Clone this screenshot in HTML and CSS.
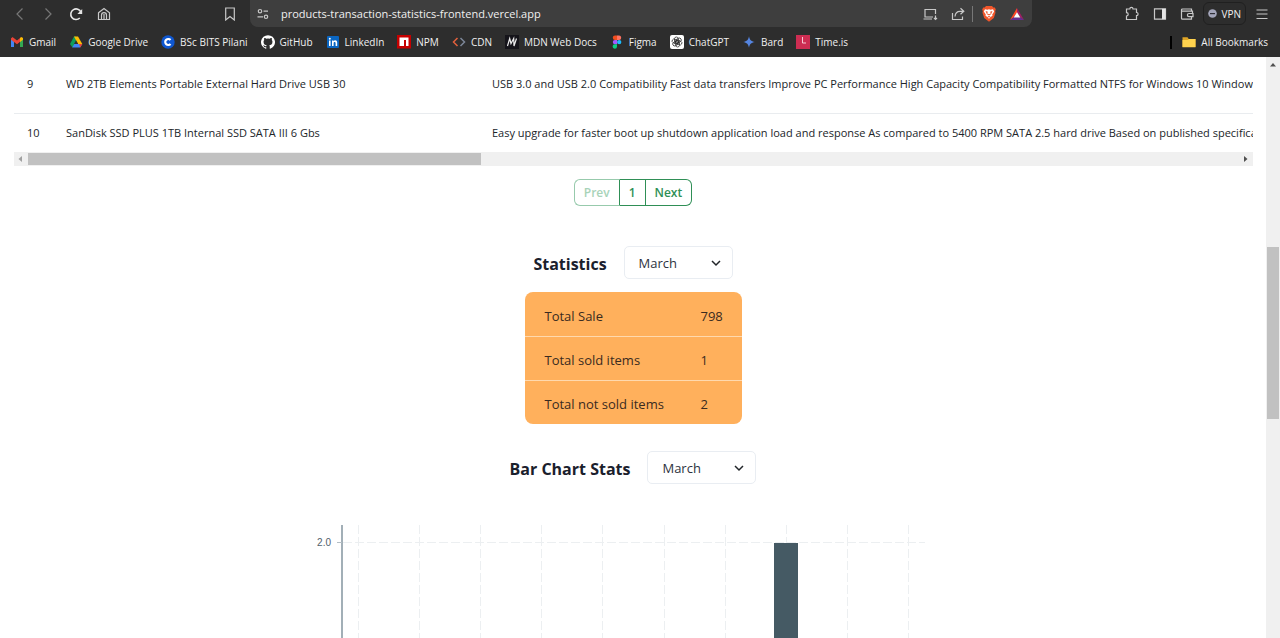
FILE: index.html
```html
<!DOCTYPE html>
<html lang="en">
<head>
<meta charset="utf-8">
<meta name="viewport" content="width=device-width, initial-scale=1">
<title>Products Transaction Statistics</title>
<link rel="stylesheet" href="styles.css">
</head>
<body>
<header class="browser">
  <div class="toolbar">
    <div class="nav">
      <button class="tool dim" aria-label="Back"><svg width="14" height="14" viewBox="0 0 14 14"><path d="M9.5 1.5 4 7l5.500 5.500"/></svg></button>
      <button class="tool dim" aria-label="Forward"><svg width="14" height="14" viewBox="0 0 14 14"><path d="M4.500 1.500 10 7l-5.500 5.500"/></svg></button>
      <button class="tool" aria-label="Reload"><svg width="14" height="14" viewBox="0 0 14 14"><path class="bold" d="M10.800 11A5.300 5.300 0 1 1 12 5.200"/><path class="solid" d="M13.200 2v5H8.400z"/></svg></button>
      <button class="tool" aria-label="Home"><svg width="14" height="14" viewBox="0 0 14 14"><path d="M1.500 5.800 7 1.500l5.500 4.300v6.700h-11zM4.500 12.500V8.200a2.500 2.500 0 0 1 5 0v4.300M7 7v5.500"/></svg></button>
    </div>
    <button class="tool" aria-label="Bookmark this page"><svg width="14" height="14" viewBox="0 0 14 14"><path d="M2.700 1h8.600v12L7 9.600 2.700 13z"/></svg></button>
    <div class="address">
      <button class="tool" aria-label="Site settings"><svg width="14" height="14" viewBox="0 0 14 14"><circle cx="4" cy="4.200" r="1.700"/><path d="M7.500 4.200H12M1.500 9.800H7"/><circle cx="10" cy="9.800" r="1.700"/></svg></button>
      <input class="url" aria-label="Address" value="products-transaction-statistics-frontend.vercel.app">
      <button class="tool" aria-label="Install app"><svg width="16" height="14" viewBox="0 0 16 14"><path d="M13.500 7V2.500H3v7.500h8M1.500 12H10M13.500 8.500v4M12 11l1.500 1.500L15 11"/></svg></button>
      <button class="tool share" aria-label="Share"><svg width="14" height="14" viewBox="0 0 14 14"><path d="M1.500 6v6.500h10V9.500M4 9.500C4.300 6 6.500 4.300 9 4.300h3.500M9.500 1.300l3.300 3-3.300 3"/></svg></button>
      <button class="tool shield" aria-label="Brave Shields"><svg class="plain" width="14" height="16" viewBox="0 0 14 16"><path fill="#f1562b" d="M4 0h6l1.300 1.400 1.500.2 1 2-.6 1.600.3 1.500-1.700 5.300L7 15.800l-4.800-3.800L.5 6.700l.3-1.500-.6-1.600 1-2 1.500-.2z"/><path fill="#fff" d="m3 3.200 2.400.5L7 3.200l1.600.5 2.400-.5 1.200 2.200-2 3.200.3 1.200L7.800 11.500 7 13l-.8-1.500-2.700-1.700.3-1.200-2-3.200z"/><path fill="#f1562b" d="m3.500 5 2.300.8-.6 1.600L7 8.200l1.800-.8-.6-1.600 2.300-.8-1.500 3.300L7 9.500 5 8.300zM5.500 10.500 7 9.900l1.500.6L7 11.600z"/></svg></button>
      <button class="tool rewards" aria-label="Rewards"><svg class="plain" width="14" height="12" viewBox="0 0 14 12"><path fill="#ff4724" d="M7 0v4.500L3.800 9.300 0 12z"/><path fill="#9e1f63" d="M7 0v4.500l3.200 4.800L14 12z"/><path fill="#662d91" d="m0 12 3.800-2.700h6.400L14 12z"/><path fill="#fff" d="m7 4.200 3.300 5.200H3.700z"/></svg></button>
    </div>
    <div class="actions">
      <button class="tool" aria-label="Extensions"><svg width="16" height="16" viewBox="0 0 16 16"><path d="M2.500 3h3.300a1.600 1.600 0 0 1 3.200 0h3.500v3.500a1.600 1.600 0 0 1 0 3.200v3.800h-10V10a1.700 1.700 0 0 0 0-3.400z"/></svg></button>
      <button class="tool" aria-label="Sidebar"><svg width="14" height="14" viewBox="0 0 14 14"><path d="M1.500 1.800h11v10.400h-11z"/><path class="solid" d="M9 1.800h3.500v10.400H9z"/></svg></button>
      <button class="tool" aria-label="Wallet"><svg width="14" height="14" viewBox="0 0 14 14"><path d="M11.500 4.200V2h-9a1 1 0 0 0-1 1v8.200a1 1 0 0 0 1 1h9V10M1.500 4.200h11v2.300M9 6.500h4v3.200H9a1.600 1.600 0 0 1 0-3.200z"/></svg></button>
      <button class="vpn"><svg class="plain" width="9" height="9" viewBox="0 0 9 9"><circle cx="4.500" cy="4.500" r="4.300" fill="#a3a5ba"/><path fill="#303038" d="M2 4h5v1.200H2z"/></svg>VPN</button>
      <button class="tool" aria-label="Menu"><svg width="14" height="14" viewBox="0 0 14 14"><path d="M1.500 3h11M1.500 7h11M1.500 11.500h11"/></svg></button>
    </div>
  </div>
  <nav class="bookmarks" aria-label="Bookmarks">
    <a href="#"><svg width="14" height="14" viewBox="0 0 14 14"><path fill="#4285f4" d="M1 3v9h3V6z"/><path fill="#34a853" d="M10 6v6h3V3z"/><path fill="#ea4335" d="M1 3.500 2.500 2 7 5.600 11 2.300V6L7 9.200 1 4.700z"/><path fill="#fbbc04" d="M10 3.100 11.500 2 13 3v1.800L10 7z"/></svg>Gmail</a>
    <a href="#"><svg width="14" height="14" viewBox="0 0 14 14"><path fill="#0f9d58" d="M5 1.500h2L9 5l-5.500 7.500L1 9z"/><path fill="#fbbc04" d="M5 1.500h4L13.300 9H9z"/><path fill="#4285f4" d="M5.300 9h8l-2.100 3.500h-8z"/><path fill="#ea4335" d="M10 9h3.300l-2 3.500z"/><path fill="#2e2e2e" d="m7 5.300 2.100 3.700H5z"/></svg>Google Drive</a>
    <a href="#"><svg width="14" height="14" viewBox="0 0 14 14"><circle cx="7" cy="7" r="6.700" fill="#0f57d0"/><path fill="none" stroke="#fff" stroke-width="2.200" d="M9.500 5A3 3 0 1 0 9.500 9"/></svg>BSc BITS Pilani</a>
    <a href="#"><svg width="14" height="14" viewBox="0 0 16 16"><path fill="#fff" d="M8 .2a8 8 0 0 0-2.500 15.600c.4.100.5-.2.500-.4v-1.400c-2.200.5-2.700-1-2.700-1-.4-.9-.9-1.200-.9-1.200-.7-.5.1-.5.100-.5.800.1 1.200.8 1.200.8.700 1.200 1.900.9 2.300.7.100-.5.300-.9.500-1.100-1.800-.2-3.600-.9-3.600-4 0-.9.300-1.600.8-2.100-.1-.2-.4-1 .1-2.100 0 0 .7-.2 2.200.8a7.500 7.500 0 0 1 4 0c1.500-1 2.200-.8 2.200-.8.400 1.100.2 1.900.1 2.100.5.600.8 1.300.8 2.100 0 3.100-1.900 3.700-3.700 3.900.3.300.6.800.6 1.500v2.300c0 .2.100.5.500.4A8 8 0 0 0 8 .2z"/></svg>GitHub</a>
    <a href="#"><svg width="14" height="14" viewBox="0 0 14 14"><rect x="1" y="1" width="12" height="12" rx="1" fill="#0a66c2"/><path fill="#fff" d="M3 5.500h1.600V11H3zM6 5.500h1.500v.8c.9-1.500 3.700-1.300 3.700 1.200V11H9.600V8c0-1.500-2-1.500-2 0v3H6z"/><circle cx="3.800" cy="3.700" r="1" fill="#fff"/></svg>LinkedIn</a>
    <a href="#"><svg width="14" height="14" viewBox="0 0 14 14"><path fill="#c50000" d="M0 0h14v13.500H0z"/><path fill="#fff" d="M2.500 2.500h9V11H9V5H7v6H2.500z"/></svg>NPM</a>
    <a href="#"><svg width="14" height="14" viewBox="0 0 14 14"><g fill="none" stroke-width="1.500"><path stroke="#e2603c" d="M5.500 3 1.500 7l4 4"/><path stroke="#7c8698" d="m8.500 3 4 4-4 4"/></g></svg>CDN</a>
    <a href="#"><svg width="14" height="14" viewBox="0 0 14 14"><path fill="#15141a" d="M0 0h14v14H0z"/><path fill="none" stroke="#eee" stroke-width="1.200" d="m2.500 11 2.200-7.500L6 8.500l2.700-5L9 11l2.500-7.500"/></svg>MDN Web Docs</a>
    <a href="#"><svg width="14" height="14" viewBox="0 0 14 14"><path fill="#f24e1e" d="M7 .5H5a2.200 2.200 0 0 0 0 4.400h2z"/><path fill="#ff7262" d="M7 .5h2a2.200 2.200 0 0 1 0 4.400H7z"/><path fill="#a259ff" d="M7 4.900H5a2.200 2.200 0 0 0 0 4.400h2z"/><circle cx="9.200" cy="7.100" r="2.200" fill="#1abcfe"/><path fill="#0acf83" d="M7 9.300H5a2.200 2.200 0 1 0 2 2.200z"/></svg>Figma</a>
    <a href="#"><svg width="14" height="14" viewBox="0 0 14 14"><rect width="14" height="14" rx="2" fill="#fff"/><g fill="none" stroke="#222" stroke-width=".7"><rect x="4.500" y="2" width="3.800" height="6.500" rx="1.900"/><rect x="4.500" y="2" width="3.800" height="6.500" rx="1.900" transform="rotate(60 7 7)"/><rect x="4.500" y="2" width="3.800" height="6.500" rx="1.900" transform="rotate(120 7 7)"/><rect x="4.500" y="2" width="3.800" height="6.500" rx="1.900" transform="rotate(180 7 7)"/><rect x="4.500" y="2" width="3.800" height="6.500" rx="1.900" transform="rotate(240 7 7)"/><rect x="4.500" y="2" width="3.800" height="6.500" rx="1.900" transform="rotate(300 7 7)"/></g></svg>ChatGPT</a>
    <a href="#"><svg width="14" height="14" viewBox="0 0 14 14"><path fill="#5585e0" d="M7 1.200c.7 3.600 2 5 5.800 5.800C9 7.800 7.700 9.200 7 12.800 6.300 9.200 5 7.800 1.200 7 5 6.200 6.300 4.800 7 1.200z"/></svg>Bard</a>
    <a href="#"><svg width="14" height="14" viewBox="0 0 14 14"><path fill="#cd2d52" d="M0 0h14v14H0z"/><path fill="none" stroke="#f7c9d4" d="M6.500 2v6H10"/></svg>Time.is</a>
    <span class="divider"></span>
    <a href="#"><svg width="14" height="14" viewBox="0 0 14 14"><path fill="#e0a526" d="M.5 2.300h5L6.700 4h6.800v8H.5z"/><path fill="#ffd34e" d="M.5 5h5.300L7 4h6.500v8.300H.5z"/></svg>All Bookmarks</a>
  </nav>
</header>

<div class="viewport">
  <main class="page">
    <section class="products">
      <div class="table-clip">
        <table class="product-table">
          <tbody>
            <tr><td class="id">9</td><td class="title">WD 2TB Elements Portable External Hard Drive USB 30</td><td>USB 3.0 and USB 2.0 Compatibility Fast data transfers Improve PC Performance High Capacity Compatibility Formatted NTFS for Windows 10 Windows 8.1 Windows 7</td></tr>
            <tr><td class="id">10</td><td class="title">SanDisk SSD PLUS 1TB Internal SSD SATA III 6 Gbs</td><td>Easy upgrade for faster boot up shutdown application load and response As compared to 5400 RPM SATA 2.5 hard drive Based on published specifications</td></tr>
          </tbody>
        </table>
      </div>
      <div class="hscroll">
        <svg width="14" height="14" viewBox="0 0 14 14"><path fill="#a0a0a0" d="M8 4v6L4.500 7z"/></svg>
        <div class="track"><div class="thumb"></div></div>
        <svg width="14" height="14" viewBox="0 0 14 14"><path fill="#505050" d="M5 4v6l3.500-3z"/></svg>
      </div>
    </section>

    <div class="pagination">
      <button disabled>Prev</button>
      <button>1</button>
      <button>Next</button>
    </div>

    <section class="statistics">
      <div class="section-head">
        <h2><label for="stats-month">Statistics</label></h2>
        <div class="select">
          <select id="stats-month"><option>March</option></select>
          <svg width="10" height="10" viewBox="0 0 10 10"><path d="m1 3 4 4 4-4"/></svg>
        </div>
      </div>
      <table class="totals">
        <tbody>
          <tr><th scope="row">Total Sale</th><td>798</td></tr>
          <tr><th scope="row">Total sold items</th><td>1</td></tr>
          <tr><th scope="row">Total not sold items</th><td>2</td></tr>
        </tbody>
      </table>
    </section>

    <section class="bar-stats">
      <div class="section-head">
        <h2><label for="chart-month">Bar Chart Stats</label></h2>
        <div class="select">
          <select id="chart-month"><option>March</option></select>
          <svg width="10" height="10" viewBox="0 0 10 10"><path d="m1 3 4 4 4-4"/></svg>
        </div>
      </div>
      <svg class="chart" width="644" height="320" viewBox="0 0 644 320" role="img" aria-label="Items per price range">
        <g class="grid">
          <path d="M32 17.500h582"/>
          <path d="M47.500 0v320M108.500 0v320M169.500 0v320M230.500 0v320M291.500 0v320M353.500 0v320M414.500 0v320M475.500 0v320M536.500 0v320M597.500 0v320"/>
        </g>
        <path class="axis" d="M31 0v320"/>
        <path class="tick" d="M26 17.500h5"/>
        <text class="axis-label" x="20" y="21">2.0</text>
        <path class="bar" d="M463 18h24v302h-24z"/>
      </svg>
    </section>
  </main>
  <div class="vscroll">
    <svg width="14" height="14" viewBox="0 0 14 14"><path fill="#505050" d="M4 9.500h6L7 6z"/></svg>
    <div class="thumb"></div>
  </div>
</div>
</body>
</html>
```

FILE: styles.css
```css
* { box-sizing: border-box; }

body {
  margin: 0;
  height: 100vh;
  overflow: hidden;
  display: flex;
  flex-direction: column;
  background: #fff;
  color: #212529;
  font: 12px/18px "Open Sans", "Noto Sans", sans-serif;
}

button, input, select { font: inherit; color: inherit; }
button { padding: 0; border: 0; background: none; }
svg { display: block; flex: none; }

/* Browser chrome */
.browser { flex: none; background: #2d2d2d; color: #f0f0f0; }
.toolbar { display: flex; height: 27px; align-items: center; }
.tool { display: flex; flex: none; }
.tool svg { fill: none; stroke: #c8c8c8; stroke-width: 1.2; }
.tool svg .solid { fill: #e4e4e4; stroke: none; }
.tool svg .bold { stroke: #e8e8e8; stroke-width: 1.6; }
.tool svg.plain { stroke: none; }
.tool.dim svg { stroke: #777; }
.nav { display: flex; gap: 14px; padding-left: 13px; margin-right: 112px; }
.address {
  flex: 1;
  display: flex;
  align-items: center;
  height: 27px;
  margin-left: 13px;
  padding: 0 8px 0 6px;
  border-radius: 0 0 8px 8px;
  background: #3e3e3e;
}
.url {
  flex: 1;
  min-width: 0;
  height: 20px;
  margin-left: 11px;
  padding: 0;
  border: 0;
  outline: 0;
  background: none;
  font-size: 11px;
}
.share { margin: 0 7px 0 13px; }
.shield { padding-left: 9px; border-left: 1px solid #777; }
.rewards { margin-left: 14px; }
.actions { display: flex; align-items: center; gap: 13px; margin-left: 92px; padding-right: 11px; }
.vpn {
  display: flex;
  align-items: center;
  gap: 4px;
  height: 23px;
  margin: 0 -4px;
  padding: 0 4px;
  border: 1px solid #202020;
  border-radius: 6px;
  font-size: 10px;
}
.bookmarks { display: flex; align-items: center; gap: 13px; height: 30px; padding: 0 12px 0 10px; font-size: 10px; }
.bookmarks a { display: flex; align-items: center; gap: 5px; color: inherit; text-decoration: none; white-space: nowrap; }
.divider { width: 2px; height: 13px; margin-left: auto; margin-right: -3px; background: #000; }

/* Page */
.viewport { flex: 1; min-height: 0; display: flex; }
.page { flex: 1; min-width: 0; overflow: hidden; }
.products { margin: 0 13px 0 14px; }
.table-clip { overflow: hidden; }
.product-table { border-collapse: collapse; white-space: nowrap; font-size: 11px; }
.product-table td { padding: 18px 13px 20px; border-bottom: 1px solid #e9ecef; }
.product-table tr:last-child td { padding: 10px 13px; border: 0; }
.product-table .id { min-width: 39px; }
.product-table .title { min-width: 426px; }

.hscroll { display: flex; align-items: center; height: 14px; background: #f0f0f0; }
.hscroll .track { flex: 1; }
.hscroll .thumb { width: 37.4%; height: 12px; background: #c1c1c1; }
.vscroll { flex: none; width: 14px; background: #f0f0f0; }
.vscroll .thumb { height: 172px; margin: 176px 1px 0; background: #c1c1c1; }

.pagination { display: flex; justify-content: center; margin-top: 13px; font-size: 12px; font-weight: 600; color: #2f8f56; }
.pagination button { height: 27px; padding: 1px 9px 0; border: 1px solid #2f8f56; border-left-width: 0; }
.pagination button:first-child { border-width: 1px; border-radius: 6px 0 0 6px; }
.pagination button:last-child { border-radius: 0 6px 6px 0; }
.pagination button:disabled { color: #a8d3b9; border-color: #97caac; border-right-color: #2f8f56; }

.statistics { margin-top: 40px; }
.bar-stats { margin-top: 27px; }
.section-head { display: flex; justify-content: center; align-items: center; gap: 17px; }
.section-head h2 { margin: 0; padding-top: 2px; font-size: 16px; line-height: 24px; font-weight: 700; color: #1a202c; }
.select { position: relative; }
.select select {
  display: block;
  width: 109px;
  height: 33px;
  padding: 0 14px;
  appearance: none;
  border: 1px solid #e9edf2;
  border-radius: 5px;
  background: #fff;
  font-size: 13px;
  color: #2d3340;
}
.select svg { position: absolute; right: 12px; top: 12px; fill: none; stroke: #212529; stroke-width: 1.5; pointer-events: none; }

.totals {
  width: 217px;
  margin: 13px auto 0;
  border-spacing: 0;
  border-radius: 8px;
  background: #ffb05c;
  font-size: 13px;
  color: #3a2b20;
}
.totals th, .totals td { height: 44px; padding: 2px 0 0 20px; font-weight: 400; text-align: left; border-top: 1px solid #ffd9ae; }
.totals td { width: 61px; }
.totals tr:first-child > * { border-top-color: transparent; }

.chart { margin: 41px auto 0; }
.grid { fill: none; stroke: #eceff1; stroke-dasharray: 9 3; }
.axis { stroke: #a2afb7; stroke-width: 2; }
.tick { stroke: #b4bec4; }
.axis-label { font: 10px "Liberation Sans", sans-serif; fill: #52616b; text-anchor: end; }
.bar { fill: #455a64; }
```
